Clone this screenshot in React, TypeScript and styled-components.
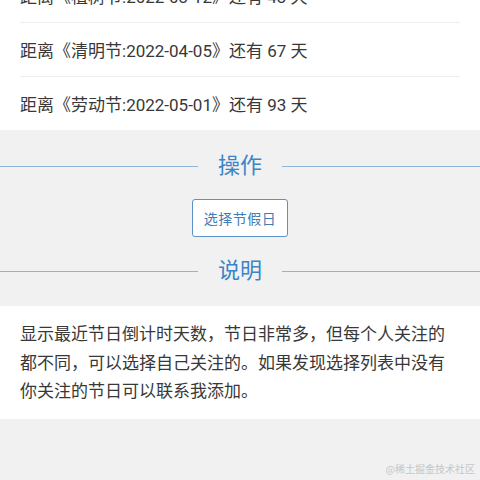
import React from 'react';
import styled, { createGlobalStyle } from 'styled-components';

const GlobalStyle = createGlobalStyle`
  html, body {
    margin: 0;
    padding: 0;
    background-color: #f1f1f1;
  }

  body {
    font-family: Roboto, "Noto Sans CJK SC", sans-serif;
    color: #333333;
  }
`;

const Page = styled.div`
  min-height: 100vh;
  overflow: hidden;
  position: relative;
`;

const CountdownList = styled.ul`
  list-style: none;
  margin: -31px 0 0 0;
  padding: 0 20px;
  background-color: #ffffff;
`;

const CountdownRow = styled.li`
  height: 53px;
  display: flex;
  align-items: center;
  font-size: 17px;
  color: #383838;
  border-bottom: 1px solid #eeeeee;

  &:last-child {
    border-bottom: none;
  }
`;

const SectionTitle = styled.div<{ $top: number }>`
  display: flex;
  align-items: center;
  gap: 20px;
  height: 30px;
  margin-top: ${(p) => p.$top}px;

  &::before,
  &::after {
    content: '';
    flex: 1;
    height: 1px;
    background-color: #8fb4d6;
  }

  span {
    font-size: 22px;
    line-height: 30px;
    color: #3a84c8;
  }
`;

const ButtonRow = styled.div`
  display: flex;
  justify-content: center;
  margin-top: 18px;
`;

const PickButton = styled.button`
  height: 38px;
  padding: 0 11px;
  background-color: #ffffff;
  border: 1px solid #5d93c4;
  border-radius: 3px;
  font-family: Roboto, "Noto Sans CJK SC", sans-serif;
  font-size: 14px;
  color: #3f7bb5;
  letter-spacing: 0.5px;
`;

const Description = styled.p`
  margin: 20px 0 0 0;
  padding: 14px 20px 13px;
  background-color: #ffffff;
  font-size: 17px;
  line-height: 28.5px;
  color: #383838;
`;

const Watermark = styled.div`
  position: absolute;
  right: 5px;
  bottom: 4px;
  font-size: 10px;
  color: #c6c6c6;
  font-family: "Noto Sans CJK SC", sans-serif;
`;

interface Festival {
  name: string;
  date: string;
  days: number;
}

const festivals: Festival[] = [
  { name: '植树节', date: '2022-03-12', days: 43 },
  { name: '清明节', date: '2022-04-05', days: 67 },
  { name: '劳动节', date: '2022-05-01', days: 93 },
];

const App: React.FC = () => {
  return (
    <>
      <GlobalStyle />
      <Page>
        <CountdownList>
          {festivals.map((f) => (
            <CountdownRow key={f.name}>
              距离《{f.name}:{f.date}》还有 {f.days} 天
            </CountdownRow>
          ))}
        </CountdownList>

        <SectionTitle $top={21}>
          <span>操作</span>
        </SectionTitle>
        <ButtonRow>
          <PickButton>选择节假日</PickButton>
        </ButtonRow>

        <SectionTitle $top={19}>
          <span>说明</span>
        </SectionTitle>
        <Description>
          显示最近节日倒计时天数，节日非常多，但每个人关注的都不同，可以选择自己关注的。如果发现选择列表中没有你关注的节日可以联系我添加。
        </Description>

        <Watermark>@稀土掘金技术社区</Watermark>
      </Page>
    </>
  );
};

export default App;
